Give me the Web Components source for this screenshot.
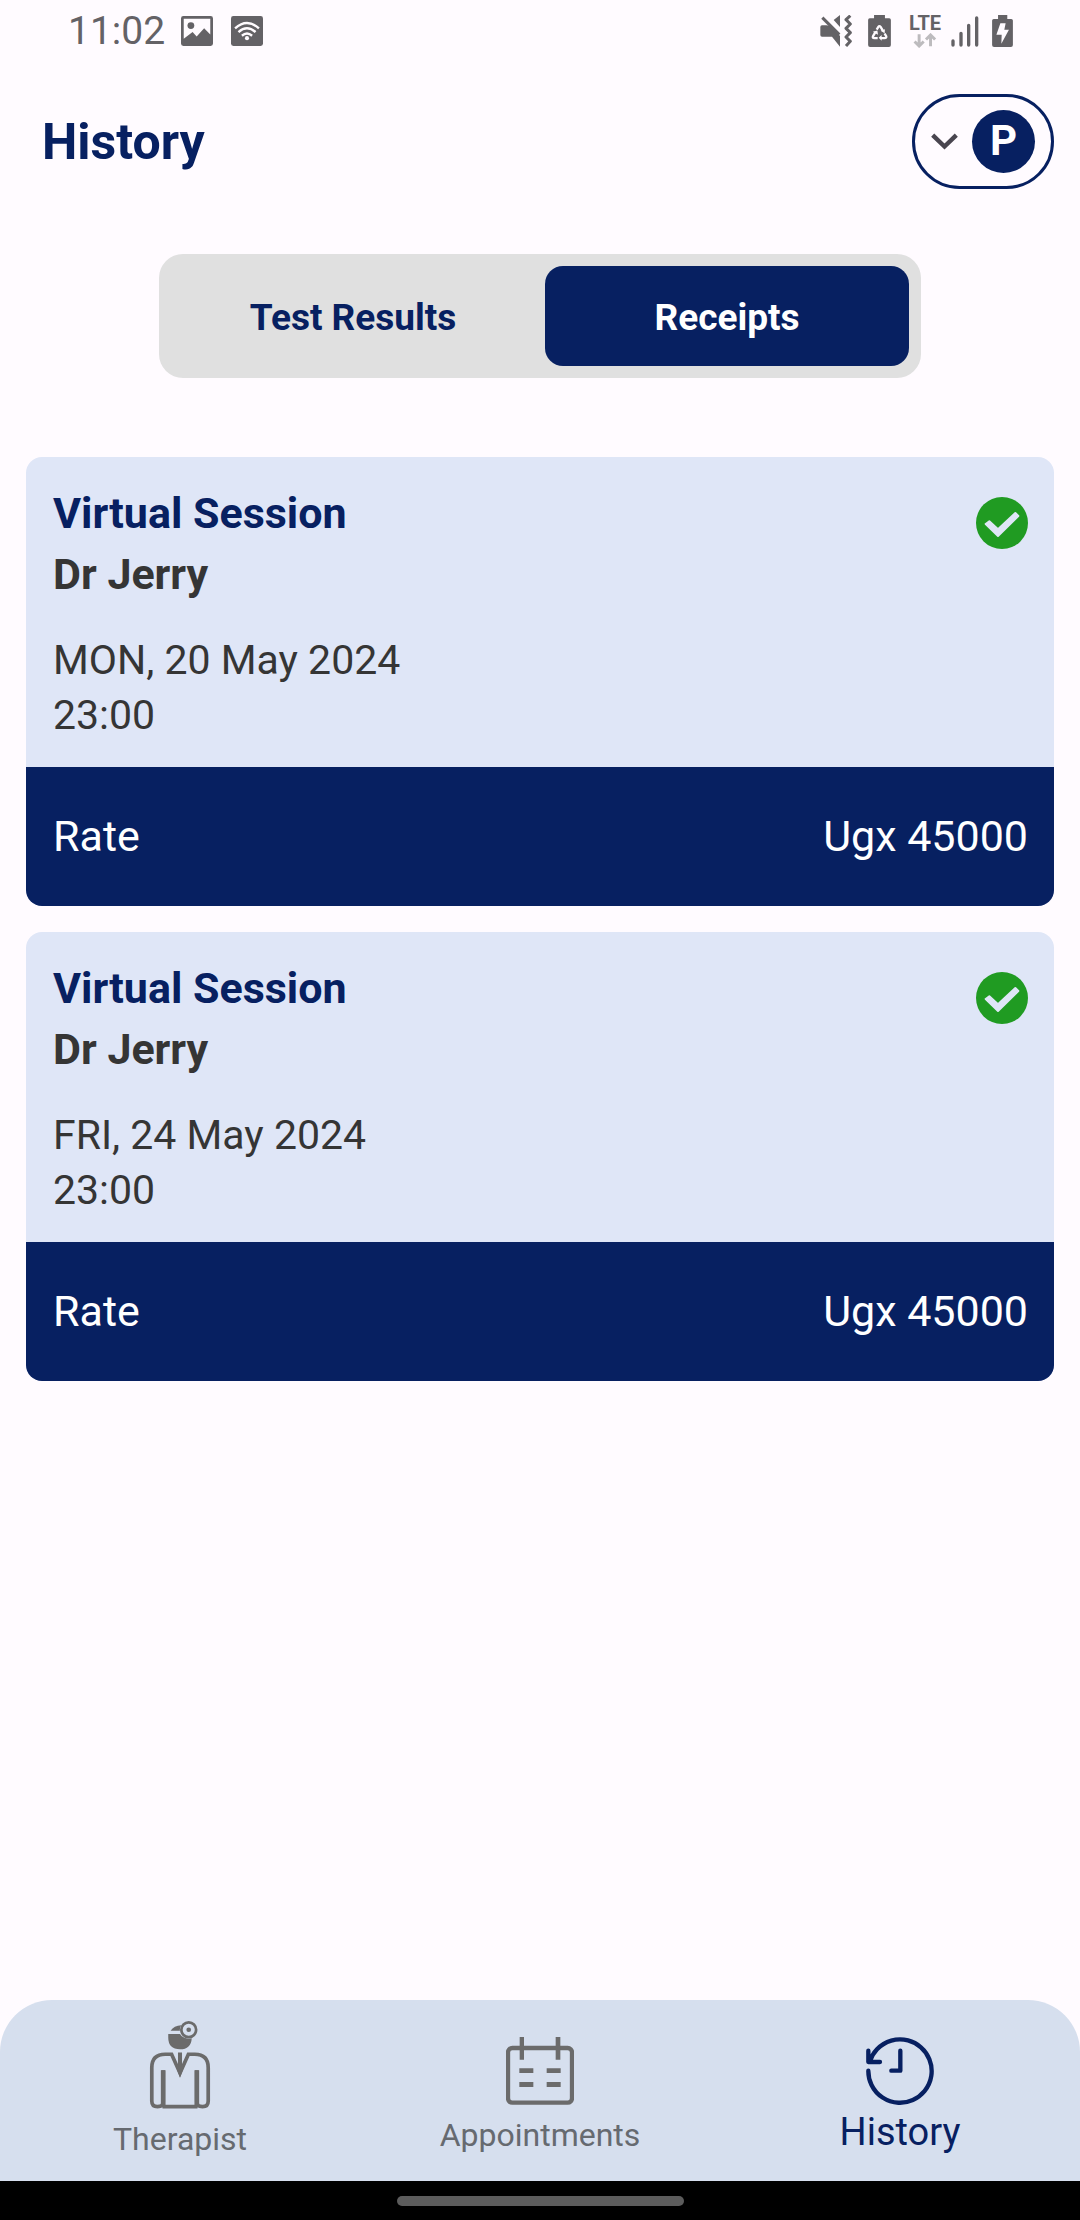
<!DOCTYPE html>
<html lang="en">
<head>
<meta charset="utf-8">
<meta name="viewport" content="width=device-width, initial-scale=1">
<title>History</title>
<style>
  html, body { margin: 0; background: #fffbff; font-family: Roboto, "Liberation Sans", sans-serif; }
</style>
</head>
<body>
<history-screen></history-screen>
<script>
const NAVY = '#072061';
const ICONS = {
  image: ['0 0 94 88', '<path fill-rule="evenodd" d="M7 0H87Q94 0 94 7V81Q94 88 87 88H7Q0 88 0 81V7Q0 0 7 0ZM8 8V67L34 47L46 60L68 36L86 54V8Z"/><circle cx="29" cy="28" r="10"/>'],
  wifi: ['0 0 94 88', '<rect width="94" height="88" rx="7"/><g fill="none" stroke="#fffbff" stroke-width="7"><path d="M12 36Q47 5 82 36"/><path d="M22 47Q47 25 72 47"/><path d="M32 58Q47 45 62 58"/></g><circle cx="47" cy="65" r="6" fill="#fffbff"/>'],
  mute: ['60 43 96 96', '<path d="M62 74H79L94 83L120 108V138L96 108H66Q61 108 61 103V79Q61 74 66 74ZM79 74L94 76L120 106V112L84 88ZM101 58L120 43V79Z"/><path d="M67 51L118 102" stroke="currentColor" stroke-width="9"/><path d="M151 45L138 57L151 70L138 83L151 96L138 109L151 122L138 136" fill="none" stroke="currentColor" stroke-width="9" stroke-linejoin="round"/>'],
  recycle: ['204 43 69 97', '<path d="M222 43H255V53H268Q273 53 273 58V134Q273 140 267 140H210Q204 140 204 134V58Q204 53 209 53H222Z"/><path d="M230 87L235 79Q238 74 242 79L249 91M254 99L259 108Q260 113 254 113H243M233 113H223Q216 113 219 107L226 95" fill="none" stroke="#fffbff" stroke-width="7"/><path fill="#fffbff" d="M242 91L255 86L254 98ZM245 104V121L236 112ZM218 94L232 90L234 103Z"/>'],
  arrows: ['340 97 68 46', '<g fill="none" stroke="#bdbbbe" stroke-width="9"><path d="M356 101V137M342 123L356 137L370 123"/><path d="M391 138V103M377 117L391 103L405 117"/></g>'],
  signal: ['452 44 84 93', '<g stroke="currentColor" stroke-width="10" stroke-linecap="round"><path d="M458 119V131M482 96V131M505 72V131M529 50V131"/></g>'],
  charging: ['576 43 63 97', '<path d="M594 43H622V55H634Q639 55 639 60V134Q639 140 633 140H582Q576 140 576 134V60Q576 55 581 55H594Z"/><path fill="#fffbff" d="M601 68H617L613 88H627L604 130L605 103H589Z"/>'],
  chevron: ['0 0 80 50', '<path d="M5 6L40 40L75 6" fill="none" stroke="#49454f" stroke-width="13"/>'],
  check: ['0 0 156 156', '<circle cx="78" cy="78" r="78" fill="#209b22"/><path fill="#dfe6f7" stroke="#dfe6f7" stroke-width="6" stroke-linejoin="round" d="M29 81L40 73L66 97L118 48L127 57L66 117Z"/>'],
  therapist: ['150 93 180 262', '<path d="M205 132H240Q248 145 266 146L275 144Q273 177 240 177Q205 177 205 142ZM212 122Q222 107 244 106Q238 114 240 122Z"/><circle cx="266" cy="119" r="22" fill="none" stroke="currentColor" stroke-width="8"/><circle cx="266" cy="119" r="7"/><path d="M190 240V335Q190 348 173 348Q156 348 156 331V232Q156 192 196 192H215L240 248L265 192H284Q324 192 324 232V331Q324 348 307 348Q290 348 290 335V240M188 348H292" fill="none" stroke="currentColor" stroke-width="11"/><path d="M183 240H197V345H183ZM283 240H297V345H283ZM234 187H246V225L251 232L240 262L229 232L234 225Z"/>'],
  calendar: ['0 0 204 204', '<rect x="6" y="33" width="192" height="164" rx="13" fill="none" stroke="currentColor" stroke-width="13"/><path d="M41 0H54V68H41ZM149 0H163V68H149ZM40 94H82V108H40ZM122 94H164V108H122ZM40 135H82V150H40ZM122 135H164V150H122Z"/>'],
  history: ['0 0 204 204', '<path d="M7 101A95 95 0 1 0 11 75M7 41V75H42M103 41V101H76" fill="none" stroke="currentColor" stroke-width="13" stroke-linecap="round" stroke-linejoin="round"/>']
};

class UiIcon extends HTMLElement {
  connectedCallback() {
    const [box, body] = ICONS[this.getAttribute('name')];
    this.attachShadow({ mode: 'open' }).innerHTML = `
      <style>:host{display:block;flex:none} svg{display:block;width:100%;height:100%}</style>
      <svg viewBox="${box}" fill="currentColor" aria-hidden="true">${body}</svg>`;
  }
}

class StatusBar extends HTMLElement {
  connectedCallback() {
    this.attachShadow({ mode: 'open' }).innerHTML = `
      <style>
        :host{display:flex;justify-content:space-between;align-items:center;height:62px;padding:0 66px 0 68px;color:#646266}
        div{display:flex;align-items:center}
        time{font-size:39px;line-height:48px;margin-right:16px}
        .pic{width:32px;height:30px;margin-right:18px}
        .mute{width:32px;height:32px;margin-right:16px}
        .bat{width:23px;height:32px}
        .lte{flex-direction:column;width:32px;margin:0 10px 0 18px;font-size:20px;line-height:18px;font-weight:700;gap:1px}
        .arr{width:24px;height:15px}
        .sig{width:28px;height:31px;margin-right:12px}
      </style>
      <div><time>11:02</time><ui-icon class="pic" name="image"></ui-icon><ui-icon class="pic" name="wifi"></ui-icon></div>
      <div><ui-icon class="mute" name="mute"></ui-icon><ui-icon class="bat" name="recycle"></ui-icon>
        <div class="lte"><span>LTE</span><ui-icon class="arr" name="arrows"></ui-icon></div>
        <ui-icon class="sig" name="signal"></ui-icon><ui-icon class="bat" name="charging"></ui-icon></div>`;
  }
}

class PageHeader extends HTMLElement {
  connectedCallback() {
    this.attachShadow({ mode: 'open' }).innerHTML = `
      <style>
        :host{display:flex;justify-content:space-between;align-items:center;padding:32px 26px 0 42px;color:${NAVY}}
        h1{margin:0;font-size:50px;line-height:64px;font-weight:700}
        button{display:flex;align-items:center;gap:14px;box-sizing:border-box;height:95px;padding:0 16px;border:3px solid ${NAVY};border-radius:48px;background:none;font:inherit}
        ui-icon{width:27px;height:17px}
        span{display:flex;justify-content:center;width:63px;height:63px;border-radius:50%;background:${NAVY};color:#fff;font-size:42px;line-height:62px;font-weight:700}
      </style>
      <h1><slot></slot></h1>
      <button type="button" aria-label="Profile"><ui-icon name="chevron"></ui-icon><span>P</span></button>`;
  }
}

class SegmentTabs extends HTMLElement {
  connectedCallback() {
    this.attachShadow({ mode: 'open' }).innerHTML = `
      <style>
        :host{display:flex;gap:10px;box-sizing:border-box;margin:65px auto 0;width:calc(100% - 318px);padding:12px;border-radius:24px;background:#e0e0e0}
        button{flex:1;height:100px;padding:4px 0 0;border:0;border-radius:18px;background:none;color:${NAVY};font:700 37px/44px Roboto,sans-serif}
        [aria-pressed=true]{background:${NAVY};color:#fff}
      </style>
      <button type="button" aria-pressed="false">Test Results</button>
      <button type="button" aria-pressed="true">Receipts</button>`;
  }
}

class ReceiptCard extends HTMLElement {
  connectedCallback() {
    this.attachShadow({ mode: 'open' }).innerHTML = `
      <style>
        :host{display:block;border-radius:16px;overflow:hidden;background:#dfe6f7;color:#353535}
        .info{display:flex;justify-content:space-between;align-items:flex-start;padding:26px 26px 24px 27px}
        h2,p{margin:0}
        h2,.doctor{font-size:43px;line-height:61px;font-weight:700}
        h2{color:${NAVY}}
        .when{font-size:41px;line-height:55px;margin-top:28px}
        ui-icon{width:52px;height:52px;margin-top:14px}
        .rate{display:flex;justify-content:space-between;padding:42px 26px 43px 27px;background:${NAVY};color:#fff;font-size:43px;line-height:54px}
      </style>
      <div class="info">
        <div><h2><slot name="title"></slot></h2><p class="doctor"><slot name="doctor"></slot></p>
        <div class="when"><div><slot name="date"></slot></div><div><slot name="time"></slot></div></div></div>
        <ui-icon name="check"></ui-icon>
      </div>
      <div class="rate"><span>Rate</span><slot name="amount"></slot></div>`;
  }
}

class NavItem extends HTMLElement {
  connectedCallback() {
    this.attachShadow({ mode: 'open' }).innerHTML = `
      <style>
        :host{display:flex;flex:1;color:#666a70;font-size:32px}
        :host([active]){color:${NAVY};font-size:38px}
        a{flex:1;display:flex;flex-direction:column;align-items:center;justify-content:flex-end;box-sizing:border-box;padding-bottom:25px;color:inherit;text-decoration:none;line-height:42px;gap:9px}
        ui-icon{width:68px;height:68px;color:#6b6b6b}
        :host([active]) ui-icon{color:${NAVY}}
        :host([active]) a{gap:6px;padding-bottom:28px}
        :host([icon=therapist]) a{padding-bottom:21px}
        ui-icon[name=therapist]{height:88px}
      </style>
      <a href="#"><ui-icon name="${this.getAttribute('icon')}"></ui-icon><slot></slot></a>`;
  }
}

class BottomNav extends HTMLElement {
  connectedCallback() {
    this.attachShadow({ mode: 'open' }).innerHTML = `
      <style>
        :host{display:block}
        nav{display:flex;height:181px;border-radius:52px 52px 0 0;background:#d6dfee}
        footer{display:grid;place-items:center;height:39px;background:#000}
        i{width:287px;height:10px;border-radius:5px;background:#5c5c5c}
      </style>
      <nav><slot></slot></nav><footer><i></i></footer>`;
  }
}

class HistoryScreen extends HTMLElement {
  connectedCallback() {
    this.attachShadow({ mode: 'open' }).innerHTML = `
      <style>
        :host{display:flex;flex-direction:column;min-height:100vh}
        main{flex:1;display:flex;flex-direction:column;gap:26px;padding:79px 26px 26px}
      </style>
      <status-bar></status-bar>
      <page-header>History</page-header>
      <segment-tabs></segment-tabs>
      <main>
        <receipt-card><span slot="title">Virtual Session</span><span slot="doctor">Dr Jerry</span><span slot="date">MON, 20 May 2024</span><span slot="time">23:00</span><span slot="amount">Ugx 45000</span></receipt-card>
        <receipt-card><span slot="title">Virtual Session</span><span slot="doctor">Dr Jerry</span><span slot="date">FRI, 24 May 2024</span><span slot="time">23:00</span><span slot="amount">Ugx 45000</span></receipt-card>
      </main>
      <bottom-nav><nav-item icon="therapist">Therapist</nav-item><nav-item icon="calendar">Appointments</nav-item><nav-item icon="history" active>History</nav-item></bottom-nav>`;
  }
}

customElements.define('ui-icon', UiIcon);
customElements.define('status-bar', StatusBar);
customElements.define('page-header', PageHeader);
customElements.define('segment-tabs', SegmentTabs);
customElements.define('receipt-card', ReceiptCard);
customElements.define('nav-item', NavItem);
customElements.define('bottom-nav', BottomNav);
customElements.define('history-screen', HistoryScreen);
</script>
</body>
</html>
